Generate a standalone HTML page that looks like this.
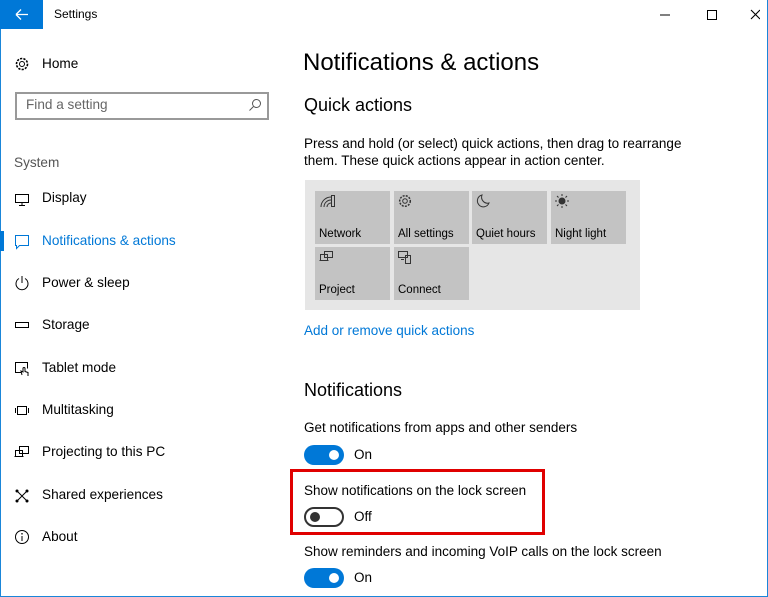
<!DOCTYPE html>
<html><head><meta charset="utf-8"><style>
*{margin:0;padding:0;box-sizing:border-box}
body{width:768px;height:597px;overflow:hidden;background:#fff;font-family:"Segoe UI","Liberation Sans",sans-serif;color:#000;position:relative}
.frame{position:absolute;left:0;top:0;width:768px;height:597px;border:1px solid #1a86d9;border-top:none}
.a{position:absolute;white-space:nowrap}
.back{position:absolute;left:0;top:0;width:43px;height:29px;background:#0078d7}
.nav{font-size:13.6px;color:#000}
.ico{position:absolute}
.tile{position:absolute;width:75px;height:53px;background:#c3c3c3;font-size:11.5px}
.tile span{position:absolute;left:4px;bottom:4px}
.tog{position:absolute;width:40px;height:20px;border-radius:10px}
.on{background:#0078d7}
.on:after{content:"";position:absolute;right:5px;top:5px;width:10px;height:10px;border-radius:50%;background:#fff}
.off{border:2px solid #333;background:#fff}
.off:after{content:"";position:absolute;left:4px;top:3px;width:10px;height:10px;border-radius:50%;background:#333}
.t14{font-size:13.5px}
</style></head><body>
<div class="frame"></div>
<div class="back"><svg width="43" height="29"><path d="M16 14.5h12M16 14.5l5-5M16 14.5l5 5" stroke="#fff" stroke-width="1.3" fill="none"/></svg></div>
<div class="a" style="left:54px;top:7px;font-size:12px">Settings</div>
<svg class="ico" style="left:640px;top:6px" width="120" height="18"><path d="M20 9h10" stroke="#000"/><path d="M67.5 4.5h9v9h-9z" stroke="#000" fill="none"/><path d="M111 4l9 9M120 4l-9 9" stroke="#000" stroke-width="1.1"/></svg>

<svg class="ico" style="left:14px;top:56px" width="16" height="16" viewBox="0 0 16 16"><circle cx="8" cy="8" r="2.5" fill="none" stroke="#000"/><circle cx="8" cy="8" r="5.5" fill="none" stroke="#000" stroke-dasharray="2.2 1.2" stroke-width="1.6"/></svg>
<div class="a nav" style="left:42px;top:56px">Home</div>
<div class="a" style="left:15px;top:92px;width:254px;height:28px;border:2px solid #999"></div>
<div class="a" style="left:26px;top:97px;font-size:13.6px;color:#666">Find a setting</div>
<svg class="ico" style="left:248px;top:98px" width="14" height="14"><circle cx="8.5" cy="5.5" r="4" fill="none" stroke="#555"/><path d="M5.5 8.5L1.5 12.5" stroke="#555"/></svg>
<div class="a" style="left:14px;top:155px;font-size:13.6px;color:#555">System</div>

<svg class="ico" style="left:14px;top:193px" width="16" height="14"><path d="M1.5 1.5h13v8h-13z M8 9.5v3M5 12.5h6" stroke="#000" fill="none"/></svg>
<div class="a nav" style="left:42px;top:190px">Display</div>
<div class="a" style="left:0;top:231px;width:4px;height:20px;background:#0078d7"></div>
<svg class="ico" style="left:14px;top:234px" width="16" height="16"><path d="M1.5 1.5h13v10h-9l-3 3v-3h-1z" stroke="#0078d7" fill="none"/></svg>
<div class="a nav" style="left:42px;top:233px;color:#0078d7">Notifications &amp; actions</div>
<svg class="ico" style="left:14px;top:275px" width="16" height="16"><path d="M5 3.5A6 6 0 1 0 11 3.5M8 1v7" stroke="#000" fill="none"/></svg>
<div class="a nav" style="left:42px;top:275px">Power &amp; sleep</div>
<svg class="ico" style="left:14px;top:320px" width="16" height="10"><path d="M1.5 2.5h13v5h-13z" stroke="#000" fill="none"/></svg>
<div class="a nav" style="left:42px;top:317px">Storage</div>
<svg class="ico" style="left:14px;top:361px" width="16" height="16"><path d="M7 11.5H1.5v-10h12v6M8 14l-1-4 2 1v-3.5a1 1 0 0 1 2 0v3l3 1v3.5" stroke="#000" fill="none"/></svg>
<div class="a nav" style="left:42px;top:360px">Tablet mode</div>
<svg class="ico" style="left:14px;top:404px" width="16" height="12"><path d="M3.5 2.5h9v8h-9zM1.5 4v5M14.5 4v5" stroke="#000" fill="none"/></svg>
<div class="a nav" style="left:42px;top:402px">Multitasking</div>
<svg class="ico" style="left:14px;top:445px" width="16" height="14"><path d="M5.5 1.5h9v7h-9zM1.5 5.5h7v6h-7zM0.5 11.5h9" stroke="#000" fill="none"/></svg>
<div class="a nav" style="left:42px;top:444px">Projecting to this PC</div>
<svg class="ico" style="left:14px;top:488px" width="16" height="16"><path d="M3 3l10 10M13 3L3 13" stroke="#000"/><circle cx="3" cy="3" r="1.5"/><circle cx="13" cy="3" r="1.5"/><circle cx="3" cy="13" r="1.5"/><circle cx="13" cy="13" r="1.5"/></svg>
<div class="a nav" style="left:42px;top:487px">Shared experiences</div>
<svg class="ico" style="left:14px;top:529px" width="16" height="16"><circle cx="8" cy="8" r="6.5" fill="none" stroke="#000"/><path d="M8 7v5" stroke="#000"/><circle cx="8" cy="4.8" r=".8"/></svg>
<div class="a nav" style="left:42px;top:529px">About</div>

<div class="a" style="left:303px;top:49px;font-size:24px;font-weight:300">Notifications &amp; actions</div>
<div class="a" style="left:304px;top:95px;font-size:18px">Quick actions</div>
<div class="a t14" style="left:304px;top:135px;line-height:17px">Press and hold (or select) quick actions, then drag to rearrange<br>them. These quick actions appear in action center.</div>
<div class="a" style="left:305px;top:180px;width:335px;height:130px;background:#e6e6e6"></div>
<div class="tile" style="left:315px;top:191px"><svg style="position:absolute;left:4px;top:3px" width="16" height="14"><path d="M2 13a10 10 0 0 1 10-10M5 13a7 7 0 0 1 7-7M8 13a4 4 0 0 1 4-4" stroke="#333" fill="none"/><path d="M12.5 1.5h3v11h-3z" stroke="#333" fill="none"/></svg><span>Network</span></div>
<div class="tile" style="left:394px;top:191px"><svg style="position:absolute;left:3px;top:2px" width="16" height="16"><circle cx="8" cy="8" r="2.3" fill="none" stroke="#333"/><circle cx="8" cy="8" r="5.3" fill="none" stroke="#333" stroke-dasharray="2 1.2" stroke-width="1.5"/></svg><span>All settings</span></div>
<div class="tile" style="left:472px;top:191px"><svg style="position:absolute;left:3px;top:2px" width="16" height="16"><path d="M7 2a6 6 0 1 0 7 8A6 6 0 0 1 7 2z" stroke="#333" fill="none"/></svg><span>Quiet hours</span></div>
<div class="tile" style="left:551px;top:191px"><svg style="position:absolute;left:3px;top:2px" width="16" height="16"><circle cx="8" cy="8" r="3.5" fill="#333"/><path d="M8 1v2M8 13v2M1 8h2M13 8h2M3 3l1.5 1.5M11.5 11.5L13 13M3 13l1.5-1.5M11.5 4.5L13 3" stroke="#333"/></svg><span>Night light</span></div>
<div class="tile" style="left:315px;top:247px"><svg style="position:absolute;left:4px;top:3px" width="16" height="12"><path d="M5.5 1.5h8v6h-8zM1.5 4.5h7v6h-7zM0.5 10.5h9" stroke="#333" fill="none"/></svg><span>Project</span></div>
<div class="tile" style="left:394px;top:247px"><svg style="position:absolute;left:3px;top:3px" width="16" height="14"><path d="M1.5 1.5h9v6h-9zM4 9.5h3M8.5 5.5h5v8h-5z" stroke="#333" fill="none"/></svg><span>Connect</span></div>
<div class="a t14" style="left:304px;top:323px;color:#0078d7">Add or remove quick actions</div>
<div class="a" style="left:304px;top:380px;font-size:18px">Notifications</div>
<div class="a t14" style="left:304px;top:420px">Get notifications from apps and other senders</div>
<div class="tog on" style="left:304px;top:445px"></div>
<div class="a t14" style="left:354px;top:447px">On</div>
<div class="a" style="left:290px;top:469px;width:255px;height:66px;border:3px solid #e00000"></div>
<div class="a t14" style="left:304px;top:483px">Show notifications on the lock screen</div>
<div class="tog off" style="left:304px;top:507px"></div>
<div class="a t14" style="left:354px;top:509px">Off</div>
<div class="a t14" style="left:304px;top:544px">Show reminders and incoming VoIP calls on the lock screen</div>
<div class="tog on" style="left:304px;top:568px"></div>
<div class="a t14" style="left:354px;top:570px">On</div>
</body></html>
